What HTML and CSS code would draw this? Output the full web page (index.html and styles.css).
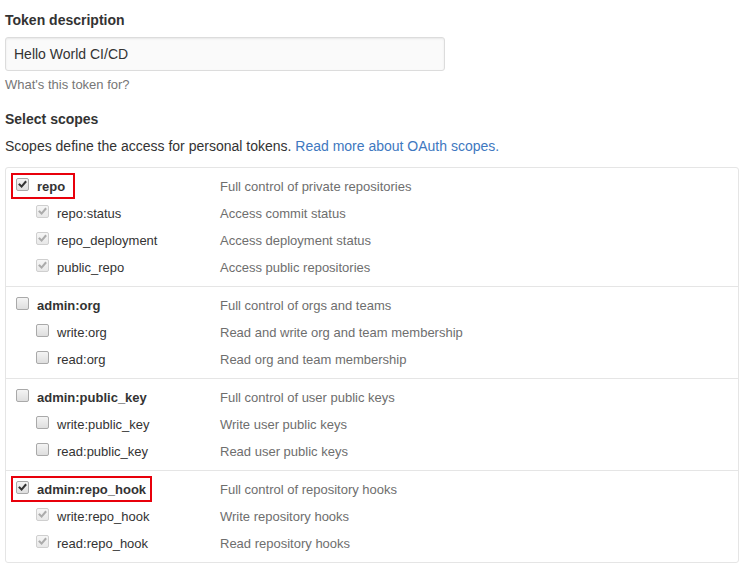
FILE: index.html
```html
<!DOCTYPE html>
<html>
<head>
<meta charset="utf-8">
<link rel="stylesheet" href="styles.css">
</head>
<body>
<div class="page">
  <div class="field-label">Token description</div>
  <div class="input">Hello World CI/CD</div>
  <div class="note">What's this token for?</div>

  <div class="section-title">Select scopes</div>
  <div class="lead">Scopes define the access for personal tokens. <a class="link" href="#">Read more about OAuth scopes.</a></div>

  <div class="scopes">
    <div class="group">
      <div class="row">
        <div class="left top"><label class="name-wrap hl hl-a"><span class="cb on"><svg viewBox="0 0 13 13"><path d="M3 6.6 L5.4 9 L10 3.6"/></svg></span><span class="name bold">repo</span></label></div>
        <div class="desc">Full control of private repositories</div>
      </div>
      <div class="row">
        <div class="left sub"><label class="name-wrap"><span class="cb on dis"><svg viewBox="0 0 13 13"><path d="M3 6.6 L5.4 9 L10 3.6"/></svg></span><span class="name">repo:status</span></label></div>
        <div class="desc">Access commit status</div>
      </div>
      <div class="row">
        <div class="left sub"><label class="name-wrap"><span class="cb on dis"><svg viewBox="0 0 13 13"><path d="M3 6.6 L5.4 9 L10 3.6"/></svg></span><span class="name">repo_deployment</span></label></div>
        <div class="desc">Access deployment status</div>
      </div>
      <div class="row">
        <div class="left sub"><label class="name-wrap"><span class="cb on dis"><svg viewBox="0 0 13 13"><path d="M3 6.6 L5.4 9 L10 3.6"/></svg></span><span class="name">public_repo</span></label></div>
        <div class="desc">Access public repositories</div>
      </div>
    </div>

    <div class="group">
      <div class="row">
        <div class="left top"><label class="name-wrap"><span class="cb"></span><span class="name bold">admin:org</span></label></div>
        <div class="desc">Full control of orgs and teams</div>
      </div>
      <div class="row">
        <div class="left sub"><label class="name-wrap"><span class="cb"></span><span class="name">write:org</span></label></div>
        <div class="desc">Read and write org and team membership</div>
      </div>
      <div class="row">
        <div class="left sub"><label class="name-wrap"><span class="cb"></span><span class="name">read:org</span></label></div>
        <div class="desc">Read org and team membership</div>
      </div>
    </div>

    <div class="group">
      <div class="row">
        <div class="left top"><label class="name-wrap"><span class="cb"></span><span class="name bold">admin:public_key</span></label></div>
        <div class="desc">Full control of user public keys</div>
      </div>
      <div class="row">
        <div class="left sub"><label class="name-wrap"><span class="cb"></span><span class="name">write:public_key</span></label></div>
        <div class="desc">Write user public keys</div>
      </div>
      <div class="row">
        <div class="left sub"><label class="name-wrap"><span class="cb"></span><span class="name">read:public_key</span></label></div>
        <div class="desc">Read user public keys</div>
      </div>
    </div>

    <div class="group">
      <div class="row">
        <div class="left top"><label class="name-wrap hl hl-b"><span class="cb on"><svg viewBox="0 0 13 13"><path d="M3 6.6 L5.4 9 L10 3.6"/></svg></span><span class="name bold">admin:repo_hook</span></label></div>
        <div class="desc">Full control of repository hooks</div>
      </div>
      <div class="row">
        <div class="left sub"><label class="name-wrap"><span class="cb on dis"><svg viewBox="0 0 13 13"><path d="M3 6.6 L5.4 9 L10 3.6"/></svg></span><span class="name">write:repo_hook</span></label></div>
        <div class="desc">Write repository hooks</div>
      </div>
      <div class="row">
        <div class="left sub"><label class="name-wrap"><span class="cb on dis"><svg viewBox="0 0 13 13"><path d="M3 6.6 L5.4 9 L10 3.6"/></svg></span><span class="name">read:repo_hook</span></label></div>
        <div class="desc">Read repository hooks</div>
      </div>
    </div>
  </div>
</div>
</body>
</html>
```

FILE: styles.css
```css
html, body {
  margin: 0;
  padding: 0;
  background: #fff;
}

body {
  font-family: "Liberation Sans", Arial, Helvetica, sans-serif;
  font-size: 14px;
  color: #333;
}

.page {
  padding: 10px 7px 0 5px;
}

.field-label {
  font-weight: bold;
  line-height: 21px;
  margin-bottom: 6px;
}

.input {
  box-sizing: border-box;
  width: 440px;
  height: 34px;
  padding: 0 8px;
  line-height: 32px;
  background: #fafafa;
  border: 1px solid #dcdcdc;
  border-radius: 3px;
  box-shadow: inset 0 1px 2px rgba(0, 0, 0, 0.075);
  color: #333;
}

.note {
  margin-top: 4px;
  font-size: 13px;
  line-height: 20px;
  color: #767676;
}

.section-title {
  margin-top: 14px;
  font-weight: bold;
  line-height: 21px;
}

.lead {
  margin-top: 6px;
  line-height: 20px;
}

.link {
  color: #4078c0;
  text-decoration: none;
}

.scopes {
  margin-top: 11px;
  width: 734px;
  box-sizing: border-box;
  border: 1px solid #e5e5e5;
  border-radius: 3px;
}

.group {
  padding: 5px 0;
  border-top: 1px solid #e5e5e5;
}

.group:first-child {
  border-top: 0;
}

.row {
  display: flex;
  height: 27px;
  font-size: 13px;
  line-height: 27px;
}

.left {
  width: 214px;
  flex: none;
  box-sizing: border-box;
}

.left.top {
  padding-left: 5px;
}

.left.sub {
  padding-left: 25px;
}

.name-wrap {
  display: inline-flex;
  align-items: flex-start;
  height: 26px;
  padding: 0 10px 0 5px;
  box-sizing: border-box;
}

.hl {
  outline: 2px solid #e8000b;
  outline-offset: -2px;
}

.hl-b {
  padding-right: 6px;
}

.cb {
  flex: none;
  box-sizing: border-box;
  width: 13px;
  height: 13px;
  margin-top: 5px;
  margin-right: 8px;
  border: 1px solid #a9a9a9;
  border-radius: 2px;
  background: linear-gradient(#f4f4f4, #dedede);
  display: block;
}

.cb svg {
  display: block;
  width: 11px;
  height: 11px;
}

.cb svg path {
  fill: none;
  stroke: #333;
  stroke-width: 2.4;
  stroke-linecap: square;
  stroke-linejoin: miter;
}

.cb.dis {
  border-color: #cfcfcf;
  background: linear-gradient(#f6f6f6, #e8e8e8);
}

.cb.dis svg path {
  stroke: #ababab;
}

.name {
  color: #333;
  line-height: 28px;
  height: 26px;
  display: block;
}

.name.bold {
  font-weight: bold;
}

.desc {
  color: #6e6e6e;
}
```
